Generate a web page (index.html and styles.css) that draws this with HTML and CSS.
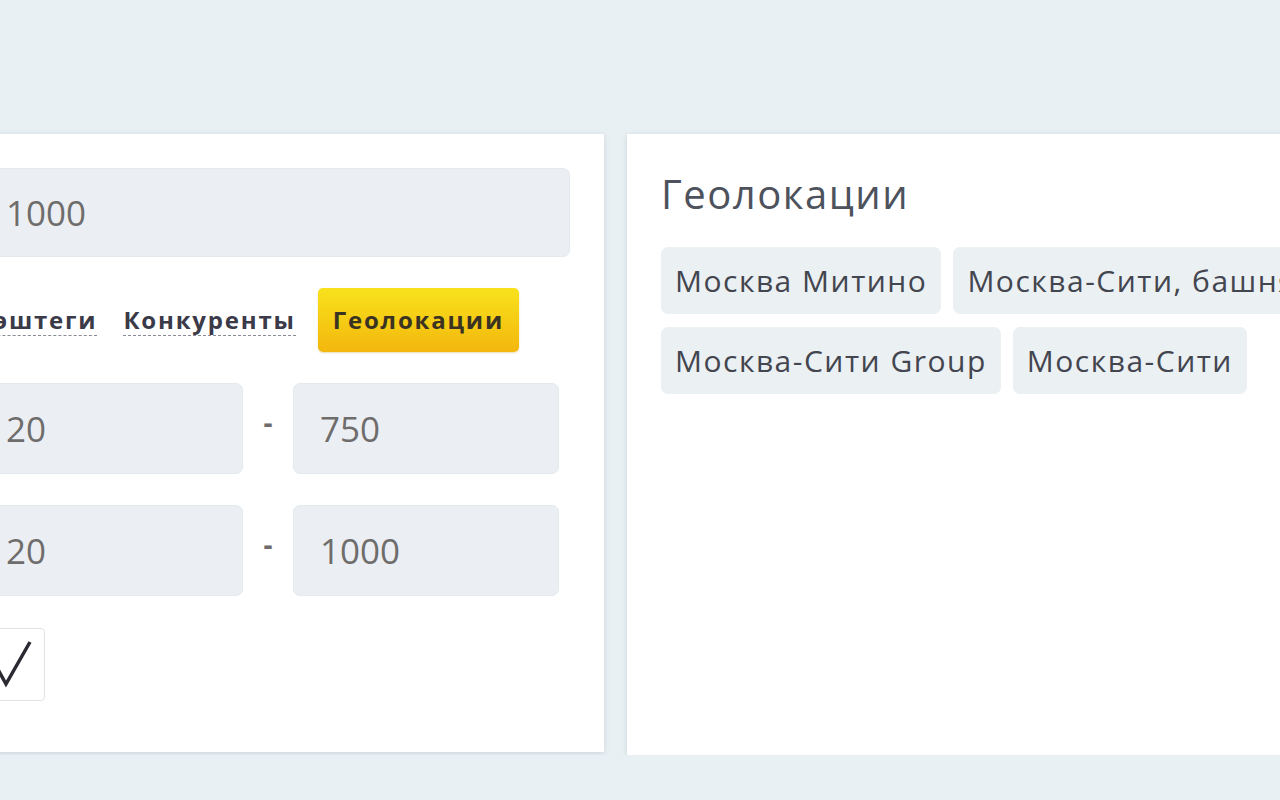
FILE: index.html
```html
<!DOCTYPE html>
<html lang="ru">
<head>
    <meta charset="UTF-8">
    <meta name="viewport" content="width=device-width, initial-scale=1.0">
    <title>Фильтры</title>
    <link rel="stylesheet" href="styles.css">
</head>
<body>
    <div class="page">
        <!-- Левая карточка: параметры поиска -->
        <div class="card card-filters">
            <div class="field field-wide">1000</div>

            <div class="tabs">
                <span class="tab">Хэштеги</span>
                <span class="tab">Конкуренты</span>
                <span class="tab tab-active">Геолокации</span>
            </div>

            <div class="range">
                <div class="field field-from">20</div>
                <span class="range-dash">-</span>
                <div class="field field-to">750</div>
            </div>

            <div class="range">
                <div class="field field-from">20</div>
                <span class="range-dash">-</span>
                <div class="field field-to">1000</div>
            </div>

            <div class="checkbox">
                <svg width="66" height="73" viewBox="0 0 66 73">
                    <polyline points="16,36 27,56 51,14" fill="none" stroke="#2b2a33" stroke-width="3.5" stroke-linejoin="miter"/>
                </svg>
            </div>
        </div>

        <!-- Правая карточка: выбранные геолокации -->
        <div class="card card-geo">
            <h2 class="geo-title">Геолокации</h2>
            <div class="chips">
                <span class="chip">Москва Митино</span>
                <span class="chip">Москва-Сити, башня Федерация</span>
                <span class="chip">Москва-Сити Group</span>
                <span class="chip">Москва-Сити</span>
            </div>
        </div>
    </div>
</body>
</html>
```

FILE: styles.css
```css
body {
    margin: 0;
    padding: 0;
    background: #e9f0f3;
    font-family: "Open Sans", "Noto Sans", sans-serif;
    color: #43454f;
    overflow: hidden;
}

.page {
    display: flex;
    align-items: flex-start;
    gap: 23px;
    margin-left: -69px;
    padding-top: 134px;
}

.card {
    background: #fff;
    box-shadow: 0 1px 5px rgba(120, 140, 150, 0.28);
    box-sizing: border-box;
    flex-shrink: 0;
}

.card-filters {
    width: 673px;
    height: 618px;
    padding: 34px 34px 0 48px;
}

.card-geo {
    width: 1000px;
    height: 621px;
    padding: 36px 34px;
}

.field {
    box-sizing: border-box;
    display: flex;
    align-items: center;
    background: #ebeff3;
    border: 1px solid #e3e9ed;
    border-radius: 7px;
    padding-left: 26px;
    font-size: 35px;
    color: #6f6c6c;
}

.field-wide {
    width: 591px;
    height: 89px;
}

.tabs {
    display: flex;
    align-items: center;
    height: 64px;
    margin-top: 31px;
    font-size: 24px;
    font-weight: bold;
    letter-spacing: 1.8px;
    color: #3b3a48;
}

.tab {
    border-bottom: 1px dashed #8a8a96;
    line-height: 1.25;
    margin-right: 22px;
}

.tab:first-child {
    margin-left: -2px;
    margin-right: 26px;
}

.tab-active {
    border: none;
    border-radius: 5px;
    background: linear-gradient(#f8e21c, #f3b70d);
    padding: 0 15px;
    height: 64px;
    line-height: 64px;
    box-shadow: 0 1px 2px rgba(180, 140, 0, 0.3);
    color: #3a3322;
}

.range {
    display: grid;
    grid-template-columns: 264px 50px 266px;
    margin-top: 31px;
}

.range .field {
    height: 91px;
}

.range-dash {
    text-align: center;
    font-size: 28px;
    font-weight: bold;
    color: #6f6c6c;
    padding-top: 20px;
}

.checkbox {
    box-sizing: border-box;
    width: 66px;
    height: 73px;
    margin-top: 32px;
    border: 1px solid #dfe3e6;
    border-radius: 4px;
    background: #fff;
}

.checkbox svg {
    display: block;
    margin: -1px;
}

.geo-title {
    margin: 0 0 29px;
    font-size: 40px;
    font-weight: normal;
    letter-spacing: 1.5px;
    line-height: 48px;
    color: #4d525c;
}

.chips {
    display: flex;
    flex-wrap: wrap;
    gap: 13px 12px;
}

.chip {
    background: #ebf0f3;
    border-radius: 7px;
    height: 67px;
    line-height: 67px;
    padding: 0 14px;
    font-size: 30px;
    letter-spacing: 1.5px;
    color: #43454f;
    white-space: nowrap;
}
```
